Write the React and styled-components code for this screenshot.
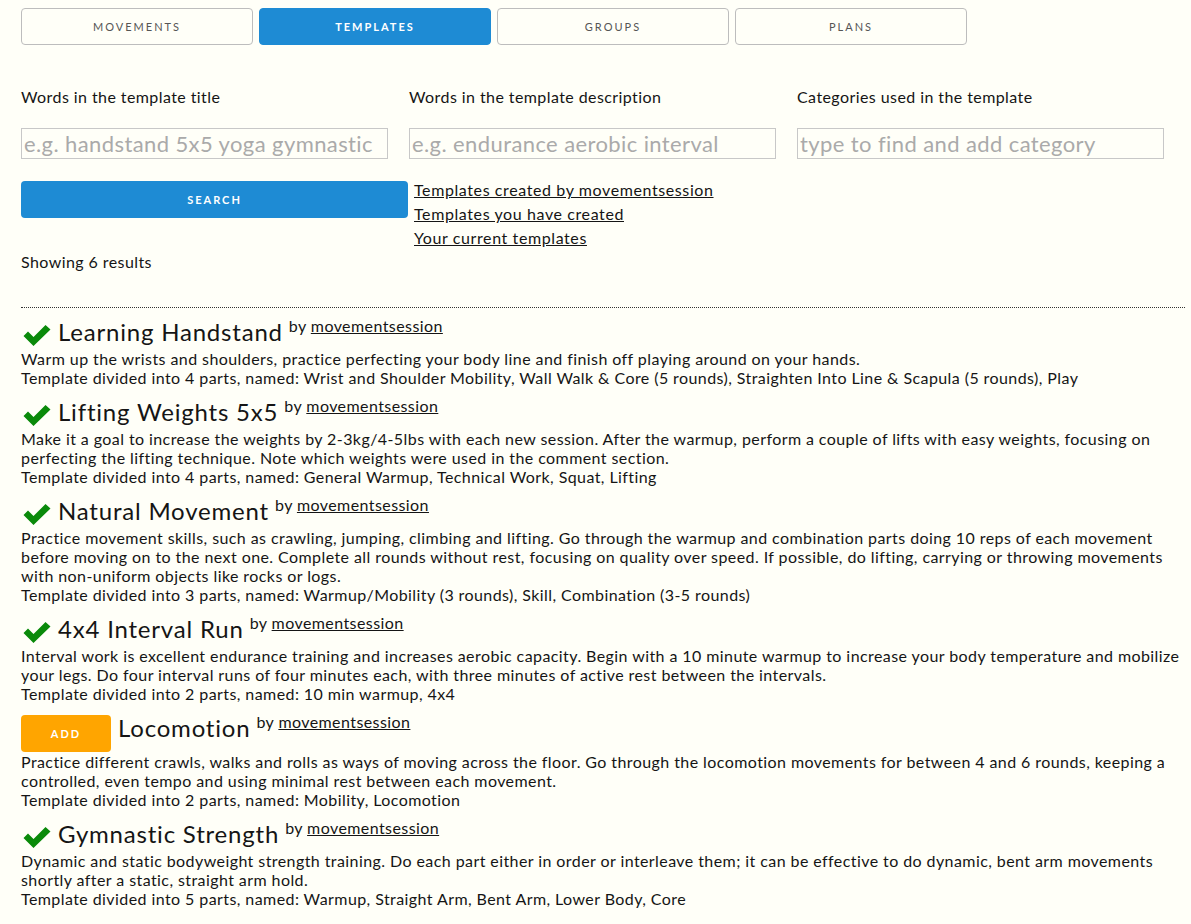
import React from "react";
import styled, { createGlobalStyle } from "styled-components";

const GlobalStyle = createGlobalStyle`
    html, body {
        margin: 0;
        padding: 0;
        background-color: #fffff8;
    }
    body {
        font-family: Lato, "Open Sans", sans-serif;
        color: #151515;
        letter-spacing: 0.42px;
    }
`;

const tabs = ["Movements", "Templates", "Groups", "Plans"];

const templates = [
    {
        title: "Learning Handstand",
        description: "Warm up the wrists and shoulders, practice perfecting your body line and finish off playing around on your hands.",
        parts: "Template divided into 4 parts, named: Wrist and Shoulder Mobility, Wall Walk & Core (5 rounds), Straighten Into Line & Scapula (5 rounds), Play",
        added: true
    },
    {
        title: "Lifting Weights 5x5",
        description: "Make it a goal to increase the weights by 2-3kg/4-5lbs with each new session. After the warmup, perform a couple of lifts with easy weights, focusing on perfecting the lifting technique. Note which weights were used in the comment section.",
        parts: "Template divided into 4 parts, named: General Warmup, Technical Work, Squat, Lifting",
        added: true
    },
    {
        title: "Natural Movement",
        description: "Practice movement skills, such as crawling, jumping, climbing and lifting. Go through the warmup and combination parts doing 10 reps of each movement before moving on to the next one. Complete all rounds without rest, focusing on quality over speed. If possible, do lifting, carrying or throwing movements with non-uniform objects like rocks or logs.",
        parts: "Template divided into 3 parts, named: Warmup/Mobility (3 rounds), Skill, Combination (3-5 rounds)",
        added: true
    },
    {
        title: "4x4 Interval Run",
        description: "Interval work is excellent endurance training and increases aerobic capacity. Begin with a 10 minute warmup to increase your body temperature and mobilize your legs. Do four interval runs of four minutes each, with three minutes of active rest between the intervals.",
        parts: "Template divided into 2 parts, named: 10 min warmup, 4x4",
        added: true
    },
    {
        title: "Locomotion",
        description: "Practice different crawls, walks and rolls as ways of moving across the floor. Go through the locomotion movements for between 4 and 6 rounds, keeping a controlled, even tempo and using minimal rest between each movement.",
        parts: "Template divided into 2 parts, named: Mobility, Locomotion",
        added: false
    },
    {
        title: "Gymnastic Strength",
        description: "Dynamic and static bodyweight strength training. Do each part either in order or interleave them; it can be effective to do dynamic, bent arm movements shortly after a static, straight arm hold.",
        parts: "Template divided into 5 parts, named: Warmup, Straight Arm, Bent Arm, Lower Body, Core",
        added: true
    }
];

const fields = [
    { label: "Words in the template title", placeholder: "e.g. handstand 5x5 yoga gymnastic" },
    { label: "Words in the template description", placeholder: "e.g. endurance aerobic interval" },
    { label: "Categories used in the template", placeholder: "type to find and add category" }
];

const CheckIcon = () => (
    <CheckSvg viewBox="0 0 28 22">
        <path d="M0.5 12 L5 7.5 L10.5 13 L22.5 1 L27.5 5.5 L10.5 22 Z" fill="#0a8a0a" />
    </CheckSvg>
);

export default class App extends React.Component {
    renderTemplates = () => {
        return templates.map((t) => (
            <Item key={t.title}>
                <TitleRow>
                    {t.added ? <CheckIcon /> : <AddButton>Add</AddButton>}
                    <Title>{t.title}</Title>
                    <By>by <Author href="#">movementsession</Author></By>
                </TitleRow>
                <Text>{t.description}</Text>
                <Text>{t.parts}</Text>
            </Item>
        ));
    }

    render() {
        return (
            <>
                <GlobalStyle />
                <Page>
                    <TabBar>
                        {tabs.map((name) => (
                            <Tab key={name} active={name === "Templates"}>{name}</Tab>
                        ))}
                    </TabBar>

                    <FieldGrid>
                        {fields.map((f) => (
                            <Field key={f.label}>
                                <Label>{f.label}</Label>
                                <Input placeholder={f.placeholder} />
                            </Field>
                        ))}
                    </FieldGrid>

                    <SearchRow>
                        <SearchButton>Search</SearchButton>
                        <LinkList>
                            <PlainLink href="#">Templates created by movementsession</PlainLink>
                            <PlainLink href="#">Templates you have created</PlainLink>
                            <PlainLink href="#">Your current templates</PlainLink>
                        </LinkList>
                    </SearchRow>

                    <Results>Showing 6 results</Results>

                    <Divider />

                    {this.renderTemplates()}
                </Page>
            </>
        );
    }
}

const Page = styled.div`
    padding: 8px 6px 0 21px;
`;

const TabBar = styled.div`
    display: flex;
    gap: 6px;
`;

const Tab = styled.div`
    box-sizing: border-box;
    width: 232px;
    height: 37px;
    display: flex;
    align-items: center;
    justify-content: center;
    border: 1px solid ${props => props.active ? "#1e8bd4" : "#bdbdbd"};
    border-radius: 4px;
    background-color: ${props => props.active ? "#1e8bd4" : "transparent"};
    color: ${props => props.active ? "#fff" : "#555"};
    font-size: 11px;
    font-weight: ${props => props.active ? 700 : 400};
    letter-spacing: 2px;
    text-transform: uppercase;
`;

const FieldGrid = styled.div`
    display: flex;
    gap: 21px;
    margin-top: 42px;
`;

const Field = styled.div`
    display: flex;
    flex-direction: column;
    width: 367px;
`;

const Label = styled.div`
    font-size: 16px;
    line-height: 20px;
`;

const Input = styled.input`
    box-sizing: border-box;
    margin-top: 21px;
    width: 367px;
    height: 31px;
    padding: 0 2px;
    border: 1px solid #c8c8c8;
    background: transparent;
    font-family: Lato, "Open Sans", sans-serif;
    font-size: 22px;
    letter-spacing: 0.4px;
    color: #333;

    &::placeholder {
        color: #aaa;
    }
`;

const SearchRow = styled.div`
    display: flex;
    align-items: flex-start;
    gap: 6px;
    margin-top: 19px;
`;

const SearchButton = styled.button`
    width: 387px;
    height: 37px;
    margin-top: 3px;
    border: none;
    border-radius: 4px;
    background-color: #1e8bd4;
    color: #fff;
    font-family: Lato, "Open Sans", sans-serif;
    font-size: 11px;
    font-weight: 700;
    letter-spacing: 2px;
    text-transform: uppercase;
`;

const LinkList = styled.div`
    display: flex;
    flex-direction: column;
`;

const PlainLink = styled.a`
    font-size: 16px;
    line-height: 24px;
    letter-spacing: 0.6px;
    color: #151515;
    text-decoration: underline;
`;

const Results = styled.div`
    font-size: 16px;
    line-height: 24px;
`;

const Divider = styled.hr`
    margin: 33px 0 9px 0;
    border: none;
    border-top: 1px dotted #333;
`;

const Item = styled.div`
    margin-bottom: 10px;
`;

const TitleRow = styled.div`
    display: flex;
    align-items: flex-start;
    gap: 7px;
    min-height: 32px;
`;

const CheckSvg = styled.svg`
    width: 28px;
    height: 22px;
    margin: 7px 0 0 2px;
`;

const AddButton = styled.div`
    box-sizing: border-box;
    width: 90px;
    height: 37px;
    margin-top: 2px;
    display: flex;
    align-items: center;
    justify-content: center;
    border-radius: 4px;
    background-color: #ffa500;
    color: #fff;
    font-size: 11px;
    font-weight: 700;
    letter-spacing: 2px;
    text-transform: uppercase;
`;

const Title = styled.span`
    font-size: 24px;
    line-height: 30px;
    letter-spacing: 0.8px;
`;

const By = styled.span`
    font-size: 16px;
    line-height: 18px;
    margin-left: -1px;
`;

const Author = styled.a`
    color: #151515;
    text-decoration: underline;
`;

const Text = styled.div`
    font-size: 16px;
    line-height: 19px;
`;
